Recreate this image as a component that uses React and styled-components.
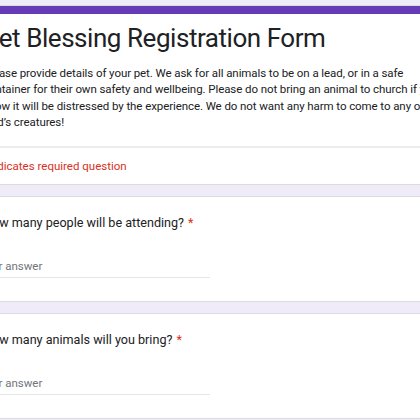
import React from 'react';
import styled, { createGlobalStyle } from 'styled-components';

const GlobalStyle = createGlobalStyle`
  body {
    margin: 0;
    background: #f0ebf8;
    font-family: Roboto, "Liberation Sans", Arial, sans-serif;
    overflow: hidden;
  }
`;

const Page = styled.div`
  margin-left: -42px;
  width: 480px;
  padding-top: 5px;
  display: flex;
  flex-direction: column;
  gap: 11px;
`;

const Card = styled.div`
  background: #fff;
  border: 1px solid #dadce0;
  border-right: none;
  border-radius: 8px 0 0 8px;
  overflow: hidden;
`;

const TopBar = styled.div`
  height: 8px;
  background: #673ab7;
`;

const Header = styled.div`
  padding: 6px 24px 15px;
`;

const Title = styled.h1`
  margin: 0;
  font-size: 26px;
  font-weight: 400;
  line-height: 36px;
  letter-spacing: -0.45px;
  color: #202124;
`;

const Description = styled.p`
  margin: 9px 0 0;
  font-size: 11.5px;
  line-height: 16.4px;
  letter-spacing: -0.08px;
  color: #202124;
  white-space: nowrap;
`;

const Divider = styled.div`
  height: 2px;
  background: #ececec;
`;

const RequiredNote = styled.div`
  padding: 10px 24px 10px 21px;
  font-size: 11.5px;
  line-height: 16px;
  color: #d93025;
`;

const Question = styled.div`
  padding: 16px 24px 23px;
`;

const Label = styled.div`
  font-size: 12.6px;
  line-height: 20px;
  color: #202124;
`;

const Star = styled.span`
  color: #d93025;
  margin-left: 4px;
`;

const Answer = styled.div`
  margin-top: 25px;
  width: 227px;
  padding-bottom: 3px;
  border-bottom: 1px solid #e6e6e6;
  font-size: 11.5px;
  line-height: 16px;
  color: #70757a;
  text-indent: -4px;
`;

const questions = [
  'How many people will be attending?',
  'How many animals will you bring?',
];

export default function App() {
  return (
    <>
      <GlobalStyle />
      <Page>
        <Card>
          <TopBar />
          <Header>
            <Title>Pet Blessing Registration Form</Title>
            <Description>
              Please provide details of your pet. We ask for all animals to be on a lead, or in a safe
              <br />
              container for their own safety and wellbeing. Please do not bring an animal to church if you
              <br />
              know it will be distressed by the experience. We do not want any harm to come to any of
              <br />
              God’s creatures!
            </Description>
          </Header>
          <Divider />
          <RequiredNote>* Indicates required question</RequiredNote>
        </Card>
        {questions.map((q) => (
          <Card key={q}>
            <Question>
              <Label>
                {q}
                <Star>*</Star>
              </Label>
              <Answer>Your answer</Answer>
            </Question>
          </Card>
        ))}
      </Page>
    </>
  );
}
